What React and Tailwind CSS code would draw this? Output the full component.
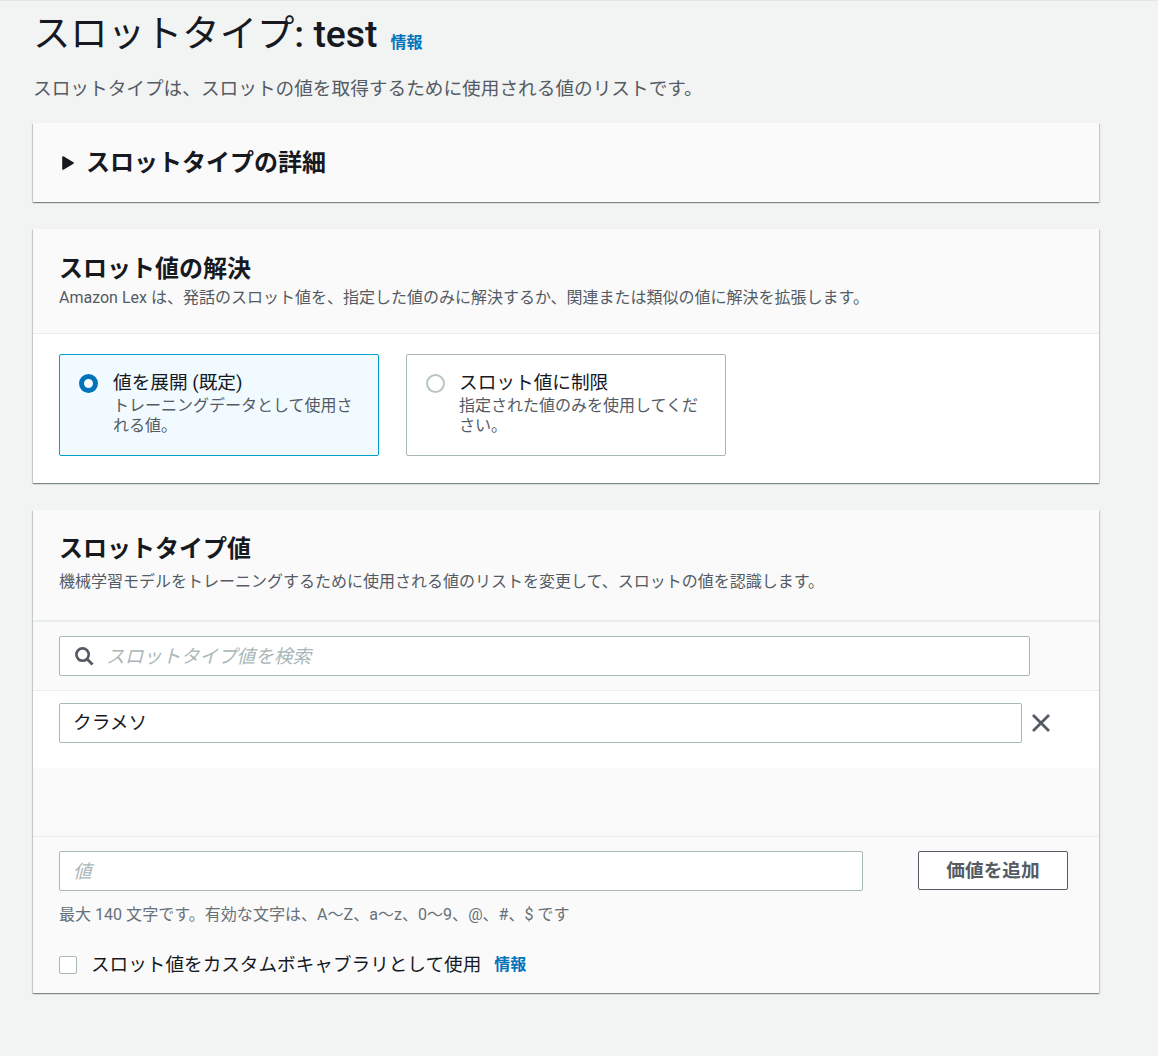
import React from "react";

const font = "font-['Roboto','Noto_Sans_CJK_JP',sans-serif]";
const cardShadow = "shadow-[0_1px_1px_0_rgba(0,28,36,0.3),1px_1px_1px_0_rgba(0,28,36,0.15),-1px_1px_1px_0_rgba(0,28,36,0.15)]";

function Card({ className = "", children }) {
  return <section className={`${cardShadow} ${className}`}>{children}</section>;
}

function CardHeader({ title, description, className = "", descClass = "" }) {
  return (
    <div className={`bg-[#fafafa] px-[26px] ${className}`}>
      <h2 className="text-[24px] leading-[32px] font-bold text-[#16191f]">{title}</h2>
      <p className={`text-[16px] leading-[20px] text-[#545b64] ${descClass}`}>{description}</p>
    </div>
  );
}

function RadioCard({ selected, title, description }) {
  return (
    <div
      className={`flex w-[320px] h-[102px] rounded-[2px] border pl-[19px] pr-[20px] pt-[16px] ${
        selected ? "gap-[15px] bg-[#f1faff] border-[#00a1c9]" : "gap-[14px] bg-white border-[#aab7b8]"
      }`}
    >
      {selected ? (
        <span className="mt-[3px] w-[19px] h-[19px] shrink-0 rounded-full border-[5px] border-[#0073bb] bg-white" />
      ) : (
        <span className="mt-[3px] w-[19px] h-[19px] shrink-0 rounded-full border-2 border-[#b8c4c5] bg-white" />
      )}
      <div className="min-w-0">
        <div className="text-[18.67px] leading-[24px] text-[#16191f]">{title}</div>
        <div className="mt-[1px] text-[16px] leading-[20px] text-[#545b64]">{description}</div>
      </div>
    </div>
  );
}

export default function App() {
  return (
    <div className={`${font} bg-[#f2f3f3] h-[1056px] border-t border-[#e4e6e6] pl-[33px] pr-[59px] overflow-hidden`}>
      <div className="flex items-end h-[59px] pb-[2px]">
        <h1 className="text-[37.33px] leading-[48px] text-[#16191f]">
          スロットタイプ<span className="font-medium">: test</span>
        </h1>
        <a className="ml-[13px] mb-[3px] text-[16px] leading-[24px] font-bold text-[#0073bb]">情報</a>
      </div>
      <p className="mt-[15px] text-[18.67px] leading-[28px] text-[#545b64]">
        スロットタイプは、スロットの値を取得するために使用される値のリストです。
      </p>

      <Card className="mt-[20px] h-[79px] bg-[#fafafa] flex items-center pl-[29px]">
        <svg width="13" height="14" viewBox="0 0 13 14" className="mr-[11px] shrink-0">
          <path d="M1 1 L11 7 L1 13 Z" fill="#16191f" stroke="#16191f" strokeWidth="1.6" strokeLinejoin="round" />
        </svg>
        <h2 className="text-[24px] leading-[32px] font-bold text-[#16191f]">スロットタイプの詳細</h2>
      </Card>

      <Card className="mt-[27px] bg-white">
        <CardHeader
          className="h-[105px] pt-[24px] border-b border-[#eaeded]"
          title="スロット値の解決"
          description="Amazon Lex は、発話のスロット値を、指定した値のみに解決するか、関連または類似の値に解決を拡張します。"
          descClass="mt-[3px]"
        />
        <div className="flex gap-[27px] pl-[26px] pt-[20px] pb-[27px]">
          <RadioCard selected title="値を展開 (既定)" description="トレーニングデータとして使用される値。" />
          <RadioCard title="スロット値に制限" description="指定された値のみを使用してください。" />
        </div>
      </Card>

      <Card className="mt-[27px] bg-white">
        <CardHeader
          className="h-[112px] pt-[23px] border-b-2 border-[#eaeded]"
          title="スロットタイプ値"
          description="機械学習モデルをトレーニングするために使用される値のリストを変更して、スロットの値を認識します。"
          descClass="mt-[7px]"
        />
        <div className="bg-[#fafafa] h-[69px] pl-[26px] pt-[14px] border-b border-[#eaeded]">
          <div className="flex items-center w-[971px] h-[40px] rounded-[2px] border border-[#aab7b8] bg-white pl-[14px]">
            <svg width="20" height="20" viewBox="0 0 21 21" fill="none" className="shrink-0">
              <circle cx="9" cy="9" r="6.5" stroke="#545b64" strokeWidth="2.8" />
              <path d="M13.6 13.6 L19.5 19.5" stroke="#545b64" strokeWidth="3" />
            </svg>
            <span className="ml-[12px] pt-[2px] text-[18.67px] italic text-[#aab7b8]">スロットタイプ値を検索</span>
          </div>
        </div>
        <div className="bg-white h-[77px] pl-[26px] pt-[12px] flex items-start">
          <div className="flex items-center w-[963px] h-[40px] rounded-[2px] border border-[#aab7b8] bg-white pl-[13px] text-[18.67px] text-[#16191f]">
            クラメソ
          </div>
          <svg width="20" height="20" viewBox="0 0 20 20" fill="none" className="ml-[9px] mt-[10px] shrink-0">
            <path d="M2 2 L18 18 M18 2 L2 18" stroke="#545b64" strokeWidth="2.8" />
          </svg>
        </div>
        <div className="bg-[#fafafa] h-[69px] border-b border-[#eaeded]" />
        <div className="bg-[#fafafa] h-[156px] pl-[26px] pt-[14px]">
          <div className="flex items-start">
            <div className="flex items-center w-[804px] h-[40px] rounded-[2px] border border-[#aab7b8] bg-white pl-[13px] pt-[2px] text-[18.67px] italic text-[#aab7b8]">
              値
            </div>
            <button className="ml-[55px] w-[150px] h-[39px] rounded-[2px] border border-[#545b64] bg-white text-[18.67px] font-bold text-[#545b64]">
              価値を追加
            </button>
          </div>
          <p className="mt-[13px] text-[16.06px] leading-[22px] text-[#687078]">
            最大 140 文字です。有効な文字は、A〜Z、a〜z、0〜9、@、#、$ です
          </p>
          <div className="mt-[26px] flex items-center">
            <span className="w-[18px] h-[18px] rounded-[2px] border border-[#aab7b8] bg-white shrink-0" />
            <span className="ml-[14px] text-[18.63px] leading-[24px] text-[#16191f]">スロット値をカスタムボキャブラリとして使用</span>
            <a className="ml-[13px] pt-[1px] text-[16px] font-bold text-[#0073bb]">情報</a>
          </div>
        </div>
      </Card>
    </div>
  );
}
